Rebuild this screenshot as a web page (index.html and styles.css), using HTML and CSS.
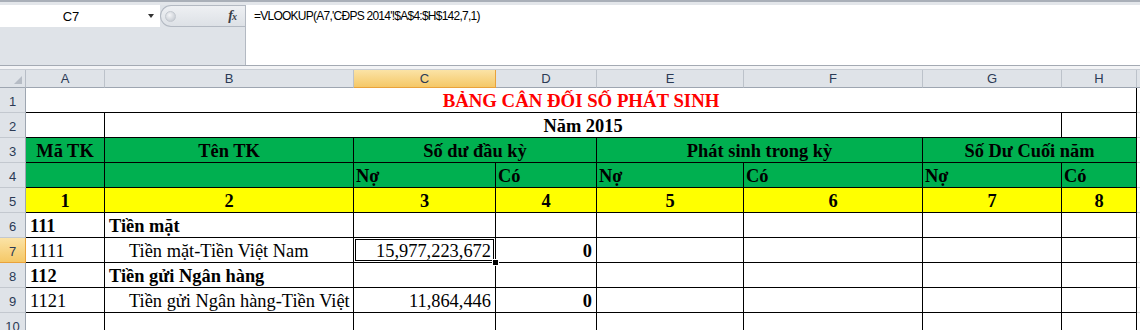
FILE: index.html
```html
<!DOCTYPE html>
<html lang="vi">
<head>
    <meta charset="UTF-8">
    <title>Bảng cân đối số phát sinh</title>
    <link rel="stylesheet" href="styles.css">
</head>
<body>
    <div class="top-edge"></div>

    <div class="formula-bar">
        <div class="name-area">
            <div class="name-row">
                <div class="name-box">
                    <span class="cell-ref">C7</span>
                    <span class="drop"></span>
                </div>
                <div class="fx-tab">
                    <span class="grip"></span>
                    <span class="fx">f<span class="fx-x">x</span></span>
                </div>
            </div>
        </div>
        <div class="formula-input">=VLOOKUP(A7,'CĐPS 2014'!$A$4:$H$142,7,1)</div>
    </div>
    <div class="bar-gap"></div>

    <div class="sheet">
        <!-- column headers -->
        <div class="corner">
            <svg width="8" height="8" viewBox="0 0 8 8"><polygon points="8,0 8,8 0,8" fill="#b6bcc5"/></svg>
        </div>
        <div class="col-h">A</div>
        <div class="col-h">B</div>
        <div class="col-h sel">C</div>
        <div class="col-h">D</div>
        <div class="col-h">E</div>
        <div class="col-h">F</div>
        <div class="col-h">G</div>
        <div class="col-h">H</div>
        <div class="col-h"></div>

        <!-- row 1 -->
        <div class="row-h">1</div>
        <div class="c title span-8">BẢNG CÂN ĐỐI SỐ PHÁT SINH</div>
        <div class="c empty"></div>

        <!-- row 2 -->
        <div class="row-h">2</div>
        <div class="c"></div>
        <div class="c b ctr span-6">Năm 2015</div>
        <div class="c"></div>
        <div class="c empty"></div>

        <!-- row 3 -->
        <div class="row-h">3</div>
        <div class="c green b ctr">Mã TK</div>
        <div class="c green b ctr">Tên TK</div>
        <div class="c green b ctr span-2">Số dư đầu kỳ</div>
        <div class="c green b ctr span-2">Phát sinh trong kỳ</div>
        <div class="c green b ctr span-2">Số Dư Cuối năm</div>
        <div class="c empty"></div>

        <!-- row 4 -->
        <div class="row-h">4</div>
        <div class="c green"></div>
        <div class="c green"></div>
        <div class="c green b tight">Nợ</div>
        <div class="c green b tight">Có</div>
        <div class="c green b tight">Nợ</div>
        <div class="c green b tight">Có</div>
        <div class="c green b tight">Nợ</div>
        <div class="c green b tight">Có</div>
        <div class="c empty"></div>

        <!-- row 5 -->
        <div class="row-h">5</div>
        <div class="c yellow b ctr">1</div>
        <div class="c yellow b ctr">2</div>
        <div class="c yellow b ctr">3</div>
        <div class="c yellow b ctr">4</div>
        <div class="c yellow b ctr">5</div>
        <div class="c yellow b ctr">6</div>
        <div class="c yellow b ctr">7</div>
        <div class="c yellow b ctr">8</div>
        <div class="c empty"></div>

        <!-- row 6 -->
        <div class="row-h">6</div>
        <div class="c b">111</div>
        <div class="c b">Tiền mặt</div>
        <div class="c"></div>
        <div class="c"></div>
        <div class="c"></div>
        <div class="c"></div>
        <div class="c"></div>
        <div class="c"></div>
        <div class="c empty"></div>

        <!-- row 7 -->
        <div class="row-h sel">7</div>
        <div class="c">1111</div>
        <div class="c indent">Tiền mặt-Tiền Việt Nam</div>
        <div class="c r active">15,977,223,672</div>
        <div class="c r b">0</div>
        <div class="c"></div>
        <div class="c"></div>
        <div class="c"></div>
        <div class="c"></div>
        <div class="c empty"></div>

        <!-- row 8 -->
        <div class="row-h">8</div>
        <div class="c b">112</div>
        <div class="c b">Tiền gửi Ngân hàng</div>
        <div class="c"></div>
        <div class="c"></div>
        <div class="c"></div>
        <div class="c"></div>
        <div class="c"></div>
        <div class="c"></div>
        <div class="c empty"></div>

        <!-- row 9 -->
        <div class="row-h">9</div>
        <div class="c">1121</div>
        <div class="c indent">Tiền gửi Ngân hàng-Tiền Việt Nam</div>
        <div class="c r">11,864,446</div>
        <div class="c r b">0</div>
        <div class="c"></div>
        <div class="c"></div>
        <div class="c"></div>
        <div class="c"></div>
        <div class="c empty"></div>

        <!-- row 10 -->
        <div class="row-h">10</div>
        <div class="c"></div>
        <div class="c"></div>
        <div class="c"></div>
        <div class="c"></div>
        <div class="c"></div>
        <div class="c"></div>
        <div class="c"></div>
        <div class="c"></div>
        <div class="c empty"></div>
    </div>
</body>
</html>
```

FILE: styles.css
```css
body {
    margin: 0;
    height: 330px;
    overflow: hidden;
    background: #fff;
    font-family: "Liberation Sans", Arial, sans-serif;
}
.top-edge {
    height: 3px;
    background: #e3e6ea;
    border-top: 2px solid #a9afb8;
}

/* formula bar */
.formula-bar {
    display: flex;
    height: 60px;
    background: #dfe3e8;
    border-bottom: 1px solid #a4aab3;
}
.name-area {
    width: 245px;
    flex-shrink: 0;
}
.name-row {
    display: flex;
    height: 22px;
}
.name-box {
    width: 160px;
    background: #fff;
    display: flex;
    align-items: center;
}
.name-box .cell-ref {
    flex: 1;
    text-align: center;
    font-size: 13px;
    color: #000;
    padding-right: 6px;
}
.name-box .drop {
    width: 0;
    height: 0;
    border-left: 3px solid transparent;
    border-right: 3px solid transparent;
    border-top: 4px solid #333;
    margin-right: 6px;
}
.fx-tab {
    flex: 1;
    display: flex;
    align-items: center;
    justify-content: space-between;
    background: linear-gradient(#eef0f3, #dde1e6);
    border: 1px solid #b3b9c2;
    border-right: none;
    border-radius: 11px 0 0 11px;
    box-sizing: border-box;
    padding: 0 9px 0 4px;
}
.fx-tab .grip {
    width: 9px;
    height: 9px;
    border-radius: 50%;
    background: radial-gradient(circle at 40% 35%, #f4f5f7, #bcc2ca);
    border: 1px solid #c3c8cf;
}
.fx-tab .fx {
    font-family: "Liberation Serif", serif;
    font-style: italic;
    font-weight: bold;
    font-size: 14px;
    color: #3a3f47;
    letter-spacing: -1px;
}
.fx-tab .fx-x {
    font-size: 10px;
}
.formula-input {
    flex: 1;
    background: #fff;
    border-left: 1px solid #b3b9c2;
    padding: 4px 8px;
    font-size: 12px;
    letter-spacing: -0.75px;
    color: #000;
}
.bar-gap {
    height: 3px;
    background: #f3f4f6;
    border-bottom: 1px solid #c8cdd4;
}

/* sheet grid */
.sheet {
    display: grid;
    grid-template-columns: 26px 79px 249px 142px 101px 147px 179px 139px 75px 1fr;
    grid-template-rows: 18px repeat(10, 25px);
}
.corner,
.col-h,
.row-h {
    background: #dfe3e8;
    color: #2b3a55;
    font-size: 13px;
    display: flex;
    align-items: center;
    justify-content: center;
    box-sizing: border-box;
}
.corner {
    align-items: flex-end;
    justify-content: flex-end;
    padding: 0 3px 3px 0;
    border-right: 1px solid #b7bdc6;
    border-bottom: 1px solid #9ea6b1;
}
.col-h {
    border-right: 1px solid #bcc2ca;
    border-bottom: 1px solid #9ea6b1;
}
.row-h {
    border-right: 1px solid #9ea6b1;
    border-bottom: 1px solid #c3c8cf;
    padding-top: 2px;
}
.col-h.sel,
.row-h.sel {
    background: linear-gradient(#fbe3a6, #f5c867);
    border-color: #e9a23b;
}

/* cells */
.c {
    box-sizing: border-box;
    border-right: 1px solid #000;
    border-bottom: 1px solid #000;
    font-family: "Liberation Serif", "Times New Roman", serif;
    font-size: 18.4px;
    color: #000;
    display: flex;
    align-items: center;
    padding: 2px 4px 0;
    white-space: nowrap;
    overflow: hidden;
}
.c.empty {
    border-right: none;
    border-bottom: 1px solid #d8d8d8;
}
.c.title {
    justify-content: center;
    color: #ff0000;
    font-weight: bold;
    font-size: 18.8px;
}
.span-2 { grid-column: span 2; }
.span-6 { grid-column: span 6; }
.span-8 { grid-column: span 8; }
.green { background: #00b050; }
.yellow { background: #ffff00; }
.b { font-weight: bold; }
.ctr { justify-content: center; }
.r { justify-content: flex-end; }
.tight { padding-left: 2px; }
.indent { padding-left: 24px; }
.c.active {
    position: relative;
    overflow: visible;
    box-shadow: inset 0 0 0 1px #fff, inset 0 0 0 2px #000;
}
.c.active::after {
    content: "";
    position: absolute;
    right: -4px;
    bottom: -4px;
    width: 5px;
    height: 5px;
    background: #000;
    border: 1px solid #fff;
    z-index: 2;
}
```
